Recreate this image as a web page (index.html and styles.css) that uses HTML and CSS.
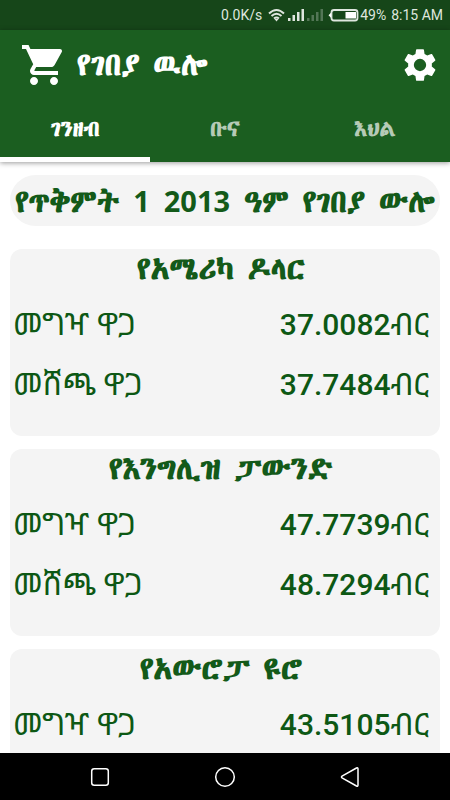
FILE: index.html
```html
<!DOCTYPE html>
<html lang="am">
<head>
<meta charset="utf-8">
<meta name="viewport" content="width=device-width, initial-scale=1">
<title>የገበያ ዉሎ</title>
<link rel="stylesheet" href="styles.css">
</head>
<body>
<div class="status">
  <span>0.0K/s</span>
  <svg class="signals" width="92" height="16" viewBox="0 0 92 16" fill="none" aria-hidden="true">
    <g stroke="#dfe6df" stroke-width="2">
      <path d="M1 6.500Q8.500-.5 16 6.500M3.500 9Q8.500 4.500 13.500 9M6 11.500Q8.500 9.500 11 11.500"/>
    </g>
    <path fill="#dfe6df" d="M6.500 12h4l-2 2.500zM20 11h2.500v3H20zM24.500 8H27v6h-2.500zM29 5h2.500v9H29zM33.500 2H36v12h-2.500z"/>
    <path fill="#537656" d="M39 11h2.500v3H39zM43.500 8H46v6h-2.500zM48 5h2.500v9H48zM52.500 2H55v12h-2.500z"/>
    <rect x="63.500" y="3" width="26" height="10.500" rx="2.500" stroke="#dfe6df" stroke-width="1.800"/>
    <path fill="#fff" d="M60.500 8.200l2.500-2.500v5zM77.500 5h10.500v6.500H77.500z"/>
  </svg>
  <span>49%</span>
  <span class="clock">8:15 AM</span>
</div>
<header class="header">
  <div class="bar">
    <svg width="48" height="48" viewBox="0 0 24 24" fill="#fff" aria-hidden="true"><path d="M7 18c-1.100 0-1.990.9-1.990 2S5.900 22 7 22s2-.9 2-2-.9-2-2-2zM1 2v2h2l3.600 7.590-1.350 2.450c-.16.280-.25.610-.25.960 0 1.100.9 2 2 2h12v-2H7.420c-.14 0-.25-.11-.25-.25l.03-.12.900-1.630h7.450c.75 0 1.410-.41 1.750-1.030l3.580-6.490c.08-.14.120-.31.120-.48 0-.55-.45-1-1-1H5.210l-.94-2H1zm16 16c-1.100 0-1.990.9-1.990 2s.89 2 1.990 2 2-.9 2-2-.9-2-2-2z"/></svg>
    <h1 class="title">የገበያ ዉሎ</h1>
    <button class="settings" type="button" aria-label="Settings">
      <svg width="38" height="38" viewBox="0 0 24 24" fill="#fff" aria-hidden="true"><path d="M19.430 12.980c.04-.32.070-.64.070-.98s-.03-.66-.07-.98l2.110-1.650c.19-.15.240-.42.120-.64l-2-3.460c-.12-.22-.39-.3-.61-.22l-2.490 1c-.52-.4-1.080-.73-1.690-.98l-.38-2.650C14.460 2.180 14.250 2 14 2h-4c-.25 0-.46.180-.49.420l-.38 2.650c-.61.250-1.170.590-1.690.980l-2.490-1c-.23-.09-.49 0-.61.220l-2 3.460c-.13.220-.07.490.12.640l2.110 1.650c-.04.320-.07.650-.07.980s.03.660.07.980l-2.110 1.650c-.19.150-.24.420-.12.640l2 3.460c.12.220.39.300.61.220l2.490-1c.52.400 1.080.730 1.690.980l.38 2.650c.03.240.24.420.49.420h4c.25 0 .46-.18.490-.42l.38-2.650c.61-.25 1.170-.59 1.690-.98l2.490 1c.23.090.49 0 .61-.22l2-3.460c.12-.22.070-.49-.12-.64l-2.110-1.650zM12 15.900a3.900 3.900 0 1 1 0-7.800 3.900 3.900 0 0 1 0 7.800z"/></svg>
    </button>
  </div>
  <nav class="tabs">
    <a class="tab active" href="#money">ገንዘብ</a>
    <a class="tab" href="#coffee">ቡና</a>
    <a class="tab" href="#grain">እህል</a>
  </nav>
</header>
<main class="content">
  <h2 class="date">የጥቅምት <span class="digits">1</span> <span class="digits">2013</span> ዓም የገበያ ውሎ</h2>
  <section class="card">
    <h3 class="name">የአሜሪካ ዶላር</h3>
    <dl class="rates">
      <div class="row"><dt>መግዣ ዋጋ</dt><dd><span class="amount">37.0082</span>ብር</dd></div>
      <div class="row"><dt>መሸጫ ዋጋ</dt><dd><span class="amount">37.7484</span>ብር</dd></div>
    </dl>
  </section>
  <section class="card">
    <h3 class="name">የእንግሊዝ ፓውንድ</h3>
    <dl class="rates">
      <div class="row"><dt>መግዣ ዋጋ</dt><dd><span class="amount">47.7739</span>ብር</dd></div>
      <div class="row"><dt>መሸጫ ዋጋ</dt><dd><span class="amount">48.7294</span>ብር</dd></div>
    </dl>
  </section>
  <section class="card">
    <h3 class="name">የአውሮፓ ዩሮ</h3>
    <dl class="rates">
      <div class="row"><dt>መግዣ ዋጋ</dt><dd><span class="amount">43.5105</span>ብር</dd></div>
    </dl>
  </section>
</main>
<footer class="sysnav">
  <button type="button" aria-label="Recent apps"><svg width="24" height="24" viewBox="0 0 24 24" fill="none" stroke="#fff" stroke-width="1.500"><rect x="3.700" y="3.700" width="16.600" height="16.600" rx="2.500"/></svg></button>
  <button type="button" aria-label="Home"><svg width="24" height="24" viewBox="0 0 24 24" fill="none" stroke="#fff" stroke-width="1.500"><circle cx="12" cy="12" r="9.300"/></svg></button>
  <button type="button" aria-label="Back"><svg width="24" height="24" viewBox="0 0 24 24" fill="none" stroke="#fff" stroke-width="1.500" stroke-linejoin="round"><path d="M4 11.200 18.500 3q1.500-.6 1.500 1v16q0 1.600-1.500 1L4 12.800q-1-.8 0-1.600z"/></svg></button>
</footer>
</body>
</html>
```
FILE: styles.css
```css
* {
  box-sizing: border-box;
}

body {
  margin: 0;
  height: 100vh;
  display: flex;
  flex-direction: column;
  overflow: hidden;
  background: #fff;
  color: #0d5814;
  font-family: Roboto, "Noto Sans Ethiopic", sans-serif;
}

h1, h2, h3, dl, dd {
  margin: 0;
}

button {
  display: flex;
  padding: 0;
  border: 0;
  background: none;
}

.status {
  flex: none;
  display: flex;
  align-items: center;
  justify-content: flex-end;
  height: 30px;
  padding: 0 7px;
  background: #164619;
  color: #dfe6df;
  font-size: 14px;
}

.signals {
  margin-left: 6px;
}

.clock {
  margin-left: 5px;
}

.header {
  flex: none;
  position: relative;
  background: #1b5e20;
  color: #fff;
  box-shadow: 0 1px 5px rgba(0, 0, 0, 0.4);
  font-family: "Abyssinica SIL", serif;
}

.bar {
  display: flex;
  align-items: center;
  height: 70px;
  padding: 0 11px 0 20px;
}

.title {
  flex: 1;
  margin-left: 9px;
  font-size: 31px;
  line-height: 40px;
}

.tabs {
  display: grid;
  grid-template-columns: repeat(3, 1fr);
}

.tab {
  height: 62px;
  border-bottom: 5px solid transparent;
  color: #b5cab6;
  font-size: 22px;
  font-weight: bold;
  line-height: 58px;
  text-align: center;
  text-decoration: none;
}

.tab.active {
  border-color: #fff;
  color: #fff;
}

.content {
  flex: 1;
  min-height: 0;
  overflow: hidden;
  padding: 13px 10px 0;
}

.date,
.name {
  color: #135a19;
  font-family: "Abyssinica SIL", serif;
  font-size: 31px;
  text-align: center;
  white-space: nowrap;
}

.date {
  height: 51px;
  margin-bottom: 23px;
  border-radius: 26px;
  background: #f4f4f4;
  line-height: 51px;
}

.digits {
  font-family: "Noto Sans", sans-serif;
  font-size: 29px;
}

.card {
  min-height: 187px;
  margin-bottom: 13px;
  padding: 0 11px 0 3px;
  border-radius: 12px;
  background: #f4f4f4;
}

.name {
  line-height: 40px;
}

.rates {
  padding-top: 6px;
}

.row {
  display: flex;
  justify-content: space-between;
  font-size: 31px;
  line-height: 60px;
}

.amount {
  font-size: 30px;
  font-weight: 500;
}

.sysnav {
  flex: none;
  display: grid;
  grid-template-columns: repeat(3, 125px);
  justify-content: center;
  justify-items: center;
  align-items: center;
  height: 47px;
  background: #000;
}
```
